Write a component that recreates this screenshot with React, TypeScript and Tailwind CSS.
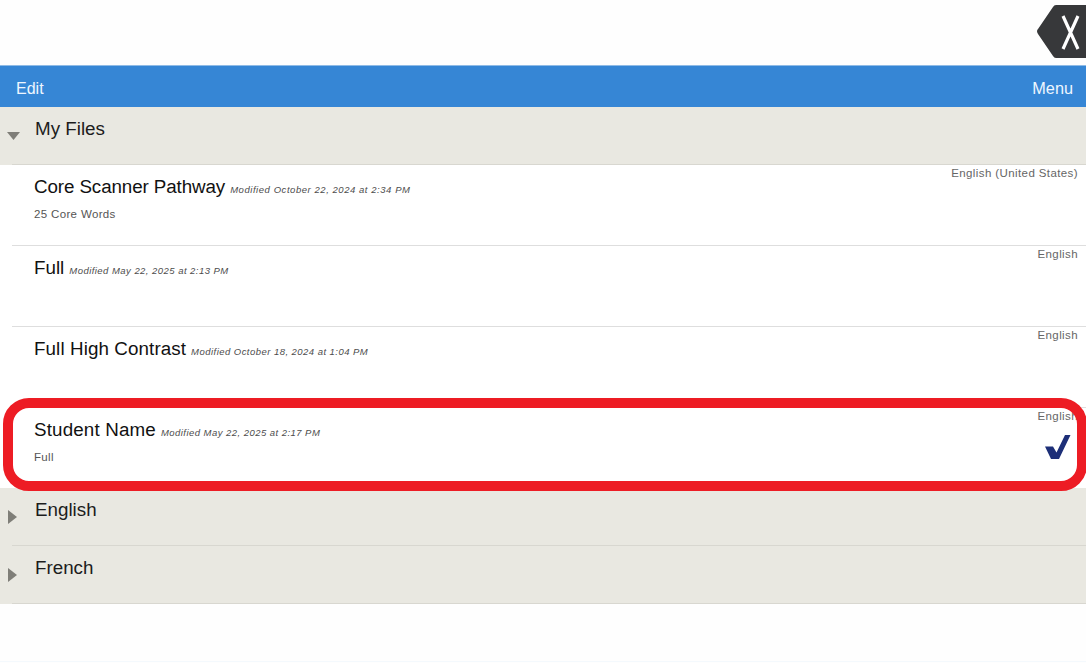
const font = "font-['Liberation_Sans',Arial,sans-serif]";

function Section({ label, open }: { label: string; open?: boolean }) {
  return (
    <div className="bg-[#e9e8e1] h-[58px]">
      <div className="flex h-[57px]">
        <div className="w-[35px] shrink-0 pt-[22px] pl-[6px]">
          {open ? (
            <svg width="16" height="12" viewBox="0 0 16 12" className="mt-[1px]">
              <path d="M1 2h13l-6.5 8z" fill="#7f7e78" />
            </svg>
          ) : (
            <svg width="12" height="16" viewBox="0 0 12 16" className="-mt-[1px] ml-[1px]">
              <path d="M1 1l9 7-9 7z" fill="#7f7e78" />
            </svg>
          )}
        </div>
        <div className="text-[18.8px] leading-[22px] pt-[11px] text-[#1c1c1c]">{label}</div>
      </div>
      <div className="h-px bg-[#d8d7d0] ml-[12px]" />
    </div>
  );
}

function Row({
  title,
  titleClass,
  date,
  dateClass,
  sub,
  lang,
  checked,
}: {
  title: string;
  titleClass?: string;
  date: string;
  dateClass?: string;
  sub?: string;
  lang: string;
  checked?: boolean;
}) {
  return (
    <div className={`${checked ? "h-[80px]" : "h-[81px]"} pl-[12px] bg-white`}>
      <div className="h-[80px] flex justify-between pl-[22px] pr-[8px]">
        <div>
          <div className="flex items-baseline pt-[11px]">
            <span className={`text-[18.8px] leading-[22px] text-[#111] ${titleClass ?? ""}`}>{title}</span>
            <span className={`text-[9.5px] italic text-[#4c4c4c] ml-[5px] ${dateClass ?? "tracking-[0.46px]"}`}>{date}</span>
          </div>
          {sub && <div className="text-[11.5px] leading-[13px] text-[#555] mt-[10px] tracking-[0.35px]">{sub}</div>}
        </div>
        <div className="flex flex-col items-end">
          <div className="text-[11.5px] leading-[13px] text-[#666] pt-[2px] tracking-[0.4px]">{lang}</div>
          {checked && (
            <svg width="26" height="25" viewBox="0 0 26 25" className="mt-[12px] mr-[7px]">
              <path d="M0 11.5h8l3.5 6L20 0h5.5L14 24H6z" fill="#1d2f78" />
            </svg>
          )}
        </div>
      </div>
      {!checked && <div className="h-px bg-[#dedede]" />}
    </div>
  );
}

export default function App() {
  return (
    <div className={`${font} relative w-[1086px] h-[663px] overflow-hidden bg-[#fefefe]`}>
      <div className="h-[65px] flex justify-end items-start pt-[4px]">
        <svg width="50" height="55" viewBox="0 0 50 55">
          <path d="M20 1h30v53H20q-2 0-3-2L2 30q-2-3 0-5L17 3q1-2 3-2z" fill="#37383a" />
          <path d="M27 12l15 33M42 12L27 45" stroke="#fff" strokeWidth="3.2" fill="none" />
        </svg>
      </div>
      <div className="h-[42px] bg-[#3686d5] border-t border-[#8fbbe6] flex items-center justify-between pt-[4px] px-[16px] text-[#eef6ff] text-[16px]">
        <span>Edit</span>
        <span className="-mr-[3px] text-[16.3px]">Menu</span>
      </div>
      <Section label="My Files" open />
      <Row title="Core Scanner Pathway" titleClass="tracking-[-0.1px]" date="Modified October 22, 2024 at 2:34 PM" dateClass="tracking-[0.55px]" sub="25 Core Words" lang="English (United States)" />
      <Row title="Full" date="Modified May 22, 2025 at 2:13 PM" lang="English" />
      <Row title="Full High Contrast" titleClass="tracking-[0.1px]" date="Modified October 18, 2024 at 1:04 PM" lang="English" />
      <Row title="Student Name" titleClass="tracking-[0.15px]" date="Modified May 22, 2025 at 2:17 PM" sub="Full" lang="English" checked />
      <Section label="English" />
      <Section label="French" />
      <div className="h-[58px] border-b border-[#f4f9fd]" />
      <div className="absolute left-[3px] top-[398px] w-[1084px] h-[93px] rounded-[26px] border-[10px] border-[#ed1c24]" />
    </div>
  );
}
